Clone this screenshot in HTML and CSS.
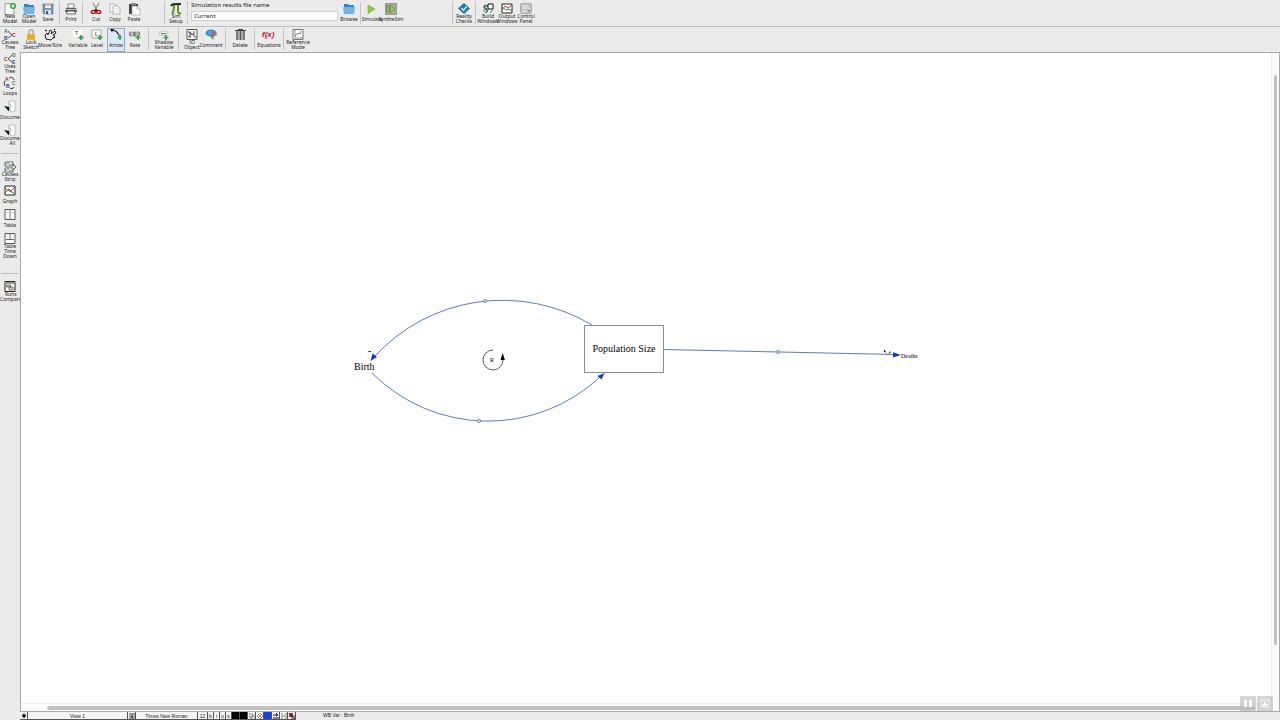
FILE: index.html
```html
<!DOCTYPE html>
<html lang="en">
<head>
<meta charset="utf-8">
<title>Population model</title>
<link rel="stylesheet" href="styles.css">
</head>
<body>
<div class="app">
  <header class="toolbar toolbar-main">
    <div class="group group-first">
      <button class="tool"><svg viewBox="0 0 12 12"><path d="M1 .5h7l2 2v9H1z" fill="#fff" stroke="#777" stroke-width=".7"/><circle cx="9" cy="3" r="3" fill="#2da53c"/><path d="M9 1.2v3.6M7.2 3h3.6" stroke="#fff"/></svg><span>New<br>Model</span></button>
      <button class="tool"><svg viewBox="0 0 12 12"><path d="M1 1h4l1 1h5v7H1z" fill="#3b7fc0"/><path d="M0 4h12l-1 7H1z" fill="#72b4e8"/></svg><span>Open<br>Model</span></button>
      <button class="tool"><svg viewBox="0 0 12 12"><path d="M1 1h10v10H2l-1-1z" fill="#6d9dbb" stroke="#446b83" stroke-width=".6"/><path d="M3 1h6v4H3z" fill="#f4f1ef"/><path d="M3 2h6" stroke="#d66b56"/><path d="M3 7h6v4H3z" fill="#dde3e6"/><path d="M4 8h2v3H4z" fill="#456"/></svg><span>Save</span></button>
    </div>
    <i class="sep"></i>
    <div class="group">
      <button class="tool"><svg viewBox="0 0 12 12"><path d="M3 1h6v4H3z" fill="#fff" stroke="#555" stroke-width=".7"/><path d="M1 5h10l1 4H0z" fill="#555"/><path d="M1 6.5h10" stroke="#ccc"/><path d="M2.500 8h7l1 3h-9z" fill="#fff" stroke="#333" stroke-width=".7"/></svg><span>Print</span></button>
    </div>
    <i class="sep"></i>
    <div class="group group-clip">
      <button class="tool"><svg viewBox="0 0 12 12"><path d="M3 0l4 7M9 0L5 7" stroke="#888" stroke-width="1.200"/><ellipse cx="3.300" cy="9" rx="2" ry="1.500" fill="none" stroke="#b41c22" stroke-width="1.500"/><ellipse cx="8.700" cy="9" rx="2" ry="1.500" fill="none" stroke="#b41c22" stroke-width="1.500"/><path d="M5 7h2" stroke="#222" stroke-width="2"/></svg><span>Cut</span></button>
      <button class="tool"><svg viewBox="0 0 12 12"><path d="M1 1h5l2 2v6H1z" fill="#fff" stroke="#999" stroke-width=".7"/><path d="M4 3h5l2 2v6H4z" fill="#fafafa" stroke="#999" stroke-width=".7"/><path d="M5.500 6h4M5.500 8h4" stroke="#ccc" stroke-width=".5"/></svg><span>Copy</span></button>
      <button class="tool"><svg viewBox="0 0 12 12"><path d="M1 1h9v10H1z" fill="#444"/><path d="M3 0h5v2H3z" fill="#888"/><path d="M4 3h5l3 3v6H4z" fill="#fff" stroke="#999" stroke-width=".6"/><path d="M9 3v3h3" fill="none" stroke="#999" stroke-width=".6"/></svg><span>Paste</span></button>
    </div>
    <i class="sep"></i>
    <div class="group">
      <button class="tool"><svg viewBox="0 0 12 12"><path d="M1 3c1-2 2-2 10-2" fill="none" stroke="#1d2a15" stroke-width="2"/><path d="M4 2c0 5-.5 7-2 9M8 2v7c0 1 1 2 3 1" fill="none" stroke="#5c9430" stroke-width="2"/></svg><span>Sim<br>Setup</span></button>
    </div>
    <i class="sep sep-dotted"></i>
    <div class="field">
      <label for="results">Simulation results file name</label>
      <input id="results" type="text" value="Current">
    </div>
    <div class="group">
      <button class="tool"><svg viewBox="0 0 12 12"><path d="M1 1h4l1 1h5v7H1z" fill="#3b7fc0"/><path d="M0 4h12l-1 7H1z" fill="#72b4e8"/></svg><span>Browse</span></button>
    </div>
    <i class="sep"></i>
    <div class="group group-run">
      <button class="tool"><svg viewBox="0 0 12 12"><path d="M2 2l7 4-7 4.500z" fill="#8bcf32" stroke="#6faf2a" stroke-width=".6"/></svg><span>Simulate</span></button>
      <button class="tool"><svg viewBox="0 0 12 12"><path d="M.5.5h11v11H.5z" fill="#a4aa9d" stroke="#888" stroke-width=".8"/><path d="M2 2l3 4-3 4zM5 2l5 4-5 4z" fill="#8fce3f" stroke="#557a34" stroke-width=".6"/></svg><span>SyntheSim</span></button>
    </div>
    <i class="sep"></i>
    <div class="group">
      <button class="tool"><svg viewBox="0 0 12 12"><path d="M6 0l6 5.500L6 11 0 5.500z" fill="#1e79a8"/><path d="M3.500 5L5.500 7.500l3-4" fill="none" stroke="#e8f6ff" stroke-width="1.300"/></svg><span>Reality<br>Checks</span></button>
    </div>
    <i class="sep"></i>
    <div class="group group-first">
      <button class="tool"><svg viewBox="0 0 12 12"><path d="M6 1h5v5H6z" fill="#fff" stroke="#111"/><path d="M6 3H2M2 6h3v3" fill="none" stroke="#111"/><path d="M4 1L1 4l3 1M1 7l3 3 2-2M11 7l-3 3" fill="none" stroke="#2b9f45"/></svg><span>Build<br>Windows</span></button>
      <button class="tool"><svg viewBox="0 0 12 12"><path d="M1 1h10v9H1z" fill="#fff" stroke="#222"/><path d="M1 7l3-4 3 2 4-3" fill="none" stroke="#c33"/><path d="M1 4l4 3 3-1 3 2" fill="none" stroke="#368b48"/></svg><span>Output<br>Windows</span></button>
      <button class="tool"><svg viewBox="0 0 12 12"><rect x=".5" y=".5" width="11" height="10" rx="1" fill="#c2c2c2" stroke="#999" stroke-width=".7"/><path d="M2 3h6M2 5h8M2 8h5" stroke="#eee"/><path d="M8 7h2v2H8z" fill="#999"/></svg><span>Control<br>Panel</span></button>
    </div>
  </header>

  <div class="body">
    <nav class="sidebar">
      <button class="tool"><svg viewBox="0 0 12 12"><path d="M4 2l4 4-4 3" fill="none" stroke="#333" stroke-width=".8"/><text class="ic green" x="0" y="4">A</text><text class="ic blue" x="0" y="11">B</text><text class="ic red" x="8" y="8">C</text></svg><span>Causes<br>Tree</span></button>
      <button class="tool"><svg viewBox="0 0 12 12"><path d="M8 2L4 6l4 3" fill="none" stroke="#333" stroke-width=".8"/><text class="ic red" x="0" y="8">C</text><text class="ic green" x="8" y="4">D</text><text class="ic blue" x="8" y="11">E</text></svg><span>Uses<br>Tree</span></button>
      <button class="tool"><svg viewBox="0 0 12 12"><path d="M5 1c2-1 4-1 5 2M10 10c-1 2-3 2-4 1M1 9C0 7 0 5 1 4" fill="none" stroke="#333" stroke-width="1"/><text class="ic red" x="1" y="4">A</text><text class="ic green" x="8" y="8">C</text><text class="ic blue" x="2" y="11">B</text></svg><span>Loops</span></button>
      <button class="tool tool-left"><svg viewBox="0 0 12 12"><path d="M5 0h6v10l-3 1-3-2z" fill="#fff" stroke="#999" stroke-width=".6"/><path d="M5 1l2 2v8L5 9z" fill="#b9cdd4"/><path d="M0 5l5 1v4.500z" fill="#111"/></svg><span>Document</span></button>
      <button class="tool tool-left"><svg viewBox="0 0 12 12"><path d="M5 0h6v10l-3 1-3-2z" fill="#fff" stroke="#999" stroke-width=".6"/><path d="M5 1l2 2v8L5 9z" fill="#b9cdd4"/><path d="M0 5l5 1v4.500z" fill="#111"/></svg><span>Document<br>All</span></button>
      <i class="rule"></i>
      <button class="tool"><svg viewBox="0 0 12 12"><path d="M1 1h8v4H1zM1 7h8v4H1z" fill="#fff" stroke="#444" stroke-width=".8"/><path d="M1 4l3-2 2 2 3-1M1 10l3-2 2 2 3-1" fill="none" stroke="#368b48" stroke-width=".8"/><path d="M9 3l3 3-3 3" fill="none" stroke="#333" stroke-width=".8"/></svg><span>Causes<br>Strip</span></button>
      <button class="tool"><svg viewBox="0 0 12 12"><path d="M1 1h10v9H1z" fill="#fff" stroke="#222"/><path d="M1 8l4-4 2 2 4-4" fill="none" stroke="#c33"/><path d="M1 3l4 3 3 1 3 2" fill="none" stroke="#368b48"/></svg><span>Graph</span></button>
      <button class="tool"><svg viewBox="0 0 12 12"><path d="M1 .5h10v10H1z" fill="#fff" stroke="#333" stroke-width=".8"/><path d="M6 1v9" stroke="#555" stroke-width=".8"/><path d="M2 3.500h8" stroke="#bbb" stroke-width=".6"/></svg><span>Table</span></button>
      <button class="tool tool-over"><svg viewBox="0 0 12 12"><path d="M1 .5h10v10H1z" fill="#fff" stroke="#333" stroke-width=".8"/><path d="M6 1v6M2 6.500h8" stroke="#444" stroke-width=".8"/></svg><span>Table<br>Time<br>Down</span></button>
      <i class="rule"></i>
      <button class="tool tool-left"><svg viewBox="0 0 12 12"><path d="M1 .5h10v10H1z" fill="#fff" stroke="#222"/><path d="M2 2h8" stroke="#333"/><path d="M2.500 4h4v2h-4zM5 6h4v3H5z" fill="#e5d9a8" stroke="#444" stroke-width=".7"/></svg><span>Runs<br>Compare</span></button>
    </nav>

    <div class="main">
      <div class="toolbar toolbar-sketch">
        <div class="group">
          <button class="tool"><svg viewBox="0 0 12 12"><path d="M4 6V3c0-3 4-3 4 0v3" fill="none" stroke="#aaa" stroke-width="1.400"/><path d="M2 5h8v6H2z" fill="#eeb52b"/><path d="M2 7h8M2 9h8" stroke="#d1941b" stroke-width=".5"/></svg><span>Lock<br>Sketch</span></button>
          <button class="tool"><svg viewBox="0 0 12 12"><path d="M2 10L1 6l2-2 1 2 2-5 2 1-1 3 4-3 1 2-3 2 2 1-4 4z" fill="#eee" stroke="#222"/><path d="M1 1l2 1M10 1l1-1M9 9l2-1" stroke="#111" stroke-width="1.200"/></svg><span>Move/Size</span></button>
        </div>
        <div class="group group-elements">
          <button class="tool"><svg viewBox="0 0 12 12"><path d="M1 1h9v7H1z" fill="#fff"/><text class="ic gray" x="3" y="6">T</text><path d="M9 6v5M6.500 8.500h5" stroke="#32a447" stroke-width="1.800"/></svg><span>Variable</span></button>
          <button class="tool"><svg viewBox="0 0 12 12"><path d="M1 1h9v8H1z" fill="#fff" stroke="#777" stroke-width=".6"/><text class="ic gray" x="4" y="7">L</text><path d="M9 6v5M6.500 8.500h5" stroke="#32a447" stroke-width="1.800"/></svg><span>Level</span></button>
          <button class="tool tool-active"><svg viewBox="0 0 12 12"><path d="M1 1c5 0 8 4 9 8" fill="none" stroke="#222" stroke-width="1.200"/><path d="M0 0l4 0-2 3z"/><path d="M10 6v5M7.500 8.500h4" stroke="#32a447" stroke-width="1.700"/></svg><span>Arrow</span></button>
          <button class="tool"><svg viewBox="0 0 12 12"><path d="M0 4h11M0 6h11M2.500 2L0 5l2.500 3M8.500 2L11 5 8.500 8M4.500 3h2l-2 4h2z" fill="none" stroke="#555" stroke-width=".7"/><path d="M9 6v5M6.500 8.500h5" stroke="#32a447" stroke-width="1.600"/></svg><span>Rate</span></button>
        </div>
        <i class="sep"></i>
        <div class="group group-single">
          <button class="tool"><svg viewBox="0 0 12 12"><path d="M2 6c-2-2 1-4 2-3 1-2 4-1 4 0 2 0 2 3 0 3z" fill="#fff" stroke="#999" stroke-width=".7"/><path d="M3 4.500h5" stroke="#777"/><path d="M8 6v5M5.500 8.500h5" stroke="#32a447" stroke-width="1.700"/></svg><span>Shadow<br>Variable</span></button>
        </div>
        <i class="sep"></i>
        <div class="group group-objects">
          <button class="tool"><svg viewBox="0 0 12 12"><path d="M1 .5h10v10H1z" fill="#fff" stroke="#555"/><path d="M4 9V3l4 4V2" fill="none" stroke="#28529a"/><path d="M2 8l6-4" stroke="#c44"/><path d="M2 3h2M8 8h2" stroke="#333"/></svg><span>IO<br>Object</span></button>
          <button class="tool"><svg viewBox="0 0 12 12"><ellipse cx="6" cy="4" rx="5.500" ry="3.600" fill="#3c8fc8"/><path d="M5 7h4l-1 4z" fill="#4aa660"/><path d="M6 6l5-3 1 3-4 2z" fill="#d4645b"/><path d="M3 3h4M3 5h3" stroke="#8cc8ec" stroke-width=".7"/></svg><span>Comment</span></button>
        </div>
        <i class="sep"></i>
        <div class="group group-tight">
          <button class="tool"><svg viewBox="0 0 12 12"><path d="M2 1h9v10H2z" fill="#aaa"/><path d="M3 2v9M6.500 2v9M10 2v9" stroke="#555" stroke-width="1.100"/><path d="M1 1.500h11M4 .5h5" stroke="#444"/></svg><span>Delete</span></button>
        </div>
        <i class="sep"></i>
        <div class="group group-tight">
          <button class="tool"><svg viewBox="0 0 12 12"><text class="fx" x="-1" y="8">f(x)</text></svg><span>Equations</span></button>
        </div>
        <i class="sep"></i>
        <div class="group group-tight">
          <button class="tool"><svg viewBox="0 0 12 12"><path d="M1 .5h10v10H1z" fill="#fff" stroke="#555" stroke-width=".8"/><path d="M3 1v8h8M3 7l3-3 2 1 1-3" fill="none" stroke="#555" stroke-width=".7"/></svg><span>Reference<br>Mode</span></button>
        </div>
      </div>

      <div class="workspace">
        <div class="canvas">
          <svg class="diagram" width="1250" height="650" viewBox="21 53 1250 650" role="img" aria-label="Causal loop diagram">
            <g class="link">
              <path d="M592 325A174 174 0 0 0 374 357"/>
              <path d="M372 373A164 164 0 0 0 600 377"/>
              <path d="M664 349.500L895 354.500"/>
            </g>
            <g class="head">
              <path d="M370.500 361l2-7.500 4.500 3.500z"/>
              <path d="M604.500 373l-7 3 4 3.500z"/>
              <path d="M901 355l-8-2.800v5.200z"/>
            </g>
            <g class="handle">
              <circle cx="485" cy="301" r="1.500"/>
              <circle cx="479" cy="421" r="1.500"/>
              <circle cx="778" cy="352" r="1.500"/>
            </g>
            <rect class="level" x="584.500" y="325.500" width="79" height="47"/>
            <text class="node" x="624" y="352" text-anchor="middle">Population Size</text>
            <text class="node" x="354" y="370">Birth</text>
            <text class="node" x="368" y="354">-</text>
            <text class="small" x="901" y="358">Deaths</text>
            <path class="loop" d="M493 350a10 10 0 1 0 10 10"/>
            <path d="M502.700 353l-2.200 7h4.400z"/>
            <text class="small" x="490" y="362">R</text>
            <path d="M884 349.500l2 2.500h-2zM889 352l2-.5-1 2z"/>
            <path d="M885 352l2 3 3-2" fill="none" stroke="#777" stroke-width=".7"/>
          </svg>
        </div>
        <div class="vscroll"><div class="vthumb"></div></div>
        <div class="hscroll"><div class="hthumb"></div></div>
        <div class="overlay">
          <button aria-label="Pause"><svg viewBox="0 0 16 15"><path d="M4 4h3v7H4zM9 4h3v7H9z" fill="#fff"/></svg></button>
          <button aria-label="Picture"><svg viewBox="0 0 16 15"><path d="M4 4h8v7H4z" fill="none" stroke="#f6f6f6"/><path d="M8 5l1 2 2 3H5l2-3z" fill="#fff"/></svg></button>
        </div>
      </div>

      <footer class="status">
        <button class="cell" aria-label="Views"><svg viewBox="0 0 6 6"><path d="M1 2h4L3 5zM2 1h2" stroke="#111" stroke-width=".7"/></svg></button>
        <button class="cell cell-view">View 1</button>
        <button class="cell" aria-label="Next view"><svg viewBox="0 0 6 6"><path d="M1 0h4v6H1z" fill="#fff" stroke="#111" stroke-width=".7"/><path d="M3 1v4M2 4h2" stroke="#111"/></svg></button>
        <button class="cell cell-font">Times New Roman</button>
        <button class="cell cell-size">12</button>
        <button class="cell cell-style">b</button>
        <button class="cell cell-style">i</button>
        <button class="cell cell-style">u</button>
        <button class="cell cell-style">s</button>
        <button class="cell swatch" aria-label="Text color"></button>
        <button class="cell swatch" aria-label="Box color"></button>
        <button class="cell" aria-label="Surround"><svg viewBox="0 0 6 6"><path d="M0 1h4v3H0zM2 3h4v3H2z" fill="#fff" stroke="#555" stroke-width=".6"/></svg></button>
        <button class="cell" aria-label="Shape"><svg viewBox="0 0 6 6"><path d="M3 0l3 3-3 3-3-3zM1 1l4 4M5 1L1 5" fill="none" stroke="#777" stroke-width=".6"/></svg></button>
        <button class="cell swatch swatch-blue" aria-label="Arrow color"></button>
        <button class="cell" aria-label="Arrow width"><svg viewBox="0 0 6 6"><path d="M0 2h4M0 5h6M3 0l2 2-2 1" fill="none" stroke="#111" stroke-width="1"/></svg></button>
        <button class="cell" aria-label="Polarity"><svg viewBox="0 0 6 6"><path d="M0 1h2M4 1h2M0 3h6M0 5h2M4 5h2" stroke="#666" stroke-width=".8"/></svg></button>
        <button class="cell" aria-label="Hide"><svg viewBox="0 0 6 6"><path d="M0 0h4v4H0z" fill="#c22"/><path d="M1 1l5 5M3 3h3v3H3z" fill="none" stroke="#222" stroke-width=".8"/></svg></button>
        <output class="message">WB Var : Birth</output>
      </footer>
    </div>
  </div>
</div>
</body>
</html>
```
FILE: styles.css
```css
* { box-sizing: border-box; }
body {
  margin: 0;
  background: #ebebeb;
  color: #222;
  font: 5px/5px "Noto Sans", "Open Sans", sans-serif;
}
button {
  margin: 0;
  padding: 0;
  border: 0;
  background: none;
  color: inherit;
  font: inherit;
}
.app {
  display: flex;
  flex-direction: column;
  height: 100vh;
  overflow: hidden;
}
.toolbar {
  display: flex;
  align-items: flex-start;
  gap: 2px;
  flex: none;
}
.toolbar-main {
  height: 27px;
  padding-top: 2px;
  border-bottom: 1px solid #bdbdbd;
}
.toolbar-sketch {
  height: 25px;
  padding: 1px 0 0 2px;
}
.group { display: flex; gap: 1px; }
.group-first { padding-left: 1px; }
.group-clip { width: 77px; padding-left: 2px; }
.group-run { width: 87px; }
.group-elements { padding: 0 2px 0 8px; }
.group-single { padding: 0 3px 0 4px; }
.group-objects { padding: 0 3px 0 2px; }
.group-tight { padding: 0 3px; }
.tool {
  display: flex;
  flex: none;
  flex-direction: column;
  align-items: center;
  width: 18px;
  height: 24px;
  padding-top: 1px;
  white-space: nowrap;
  text-align: center;
}
.tool svg {
  flex: none;
  width: 12px;
  height: 12px;
  overflow: visible;
}
.tool span {
  display: flex;
  flex: none;
  align-items: center;
  justify-content: center;
  height: 10px;
  margin-top: -1px;
}
.tool-active {
  background: #dbe8f5;
  box-shadow: inset 0 0 0 1px #92abc6;
}
.ic { font: bold 5px "Liberation Sans", sans-serif; }
.green { fill: #239343; }
.blue { fill: #233f9c; }
.red { fill: #b02a2a; }
.gray { fill: #666; }
.fx { font: italic bold 8px "Liberation Sans", sans-serif; fill: #b3151c; }
.sep {
  flex: none;
  width: 1px;
  height: 22px;
  background: #c4c4c4;
}
.sep-dotted { background: none; border-left: 1px dotted #aaa; }
.field {
  display: flex;
  flex-direction: column;
  gap: 2px;
  width: 148px;
  padding-left: 1px;
  font-size: 6px;
  line-height: 7px;
}
.field input {
  width: 100%;
  height: 10px;
  padding: 0 2px;
  border: 1px solid #d0d0d0;
  background: #fff;
  color: #222;
  font: inherit;
}
.body { display: flex; flex: 1; min-height: 0; }
.sidebar {
  flex: none;
  width: 20px;
  padding-top: 1px;
  overflow: hidden;
}
.sidebar .tool { width: 20px; }
.sidebar .tool-left { align-items: flex-start; }
.sidebar .tool-left svg { margin-left: 4px; }
.tool-over span { height: 15px; }
.rule {
  display: block;
  height: 1px;
  margin: 5px 1px 6px;
  background: #bdbdbd;
}
.tool-over + .rule { margin-top: 17px; }
.main { display: flex; flex: 1; flex-direction: column; min-width: 0; }
.workspace {
  position: relative;
  display: grid;
  flex: 1;
  grid-template: minmax(0, 1fr) 8px / minmax(0, 1fr) 8px;
  min-height: 0;
  border: 1px solid #aaa;
}
.canvas { overflow: hidden; background: #fff; }
.diagram { display: block; }
.link { fill: none; stroke: #5c7cbe; stroke-width: 1; }
.head { fill: #1239d0; }
.handle { fill: #fff; stroke: #405f9c; stroke-width: .8; }
.level { fill: #fff; stroke: #8c8c8c; }
.node { font: 10px "Liberation Serif", serif; }
.small { font: 6px "Liberation Serif", serif; }
.loop { fill: none; stroke: #333; stroke-width: .8; }
.vscroll {
  grid-row: span 2;
  grid-column: 2;
  padding: 22px 2px 66px;
  border-left: 1px solid #eee;
  background: #fafafa;
}
.vthumb { height: 100%; border-radius: 2px; background: #c1c1c1; }
.hscroll {
  grid-row: 2;
  grid-column: 1;
  padding: 2px 16px 2px 26px;
  border-top: 1px solid #eee;
  background: #fafafa;
}
.hthumb { height: 4px; border-radius: 2px; background: #c1c1c1; }
.overlay {
  position: absolute;
  right: 6px;
  bottom: 0;
  display: flex;
  gap: 1px;
}
.overlay button { width: 16px; height: 15px; background: rgb(185 185 185 / 60%); }
.overlay svg { display: block; width: 16px; height: 15px; }
.status {
  display: flex;
  flex: none;
  height: 8px;
  font: 5px/6px "Liberation Sans", sans-serif;
}
.cell {
  display: flex;
  flex: none;
  align-items: center;
  justify-content: center;
  width: 8px;
  height: 8px;
  border: solid #555;
  border-width: 0 1px 1px 0;
  background: #f4f4f4;
}
.cell svg { width: 6px; height: 6px; }
.cell-view { width: 100px; }
.cell-font { width: 62px; }
.cell-size { width: 10px; }
.cell-style { width: 6px; }
.swatch { background: #000; }
.swatch-blue { background: #1440e0; }
.message { padding-left: 27px; }
```
